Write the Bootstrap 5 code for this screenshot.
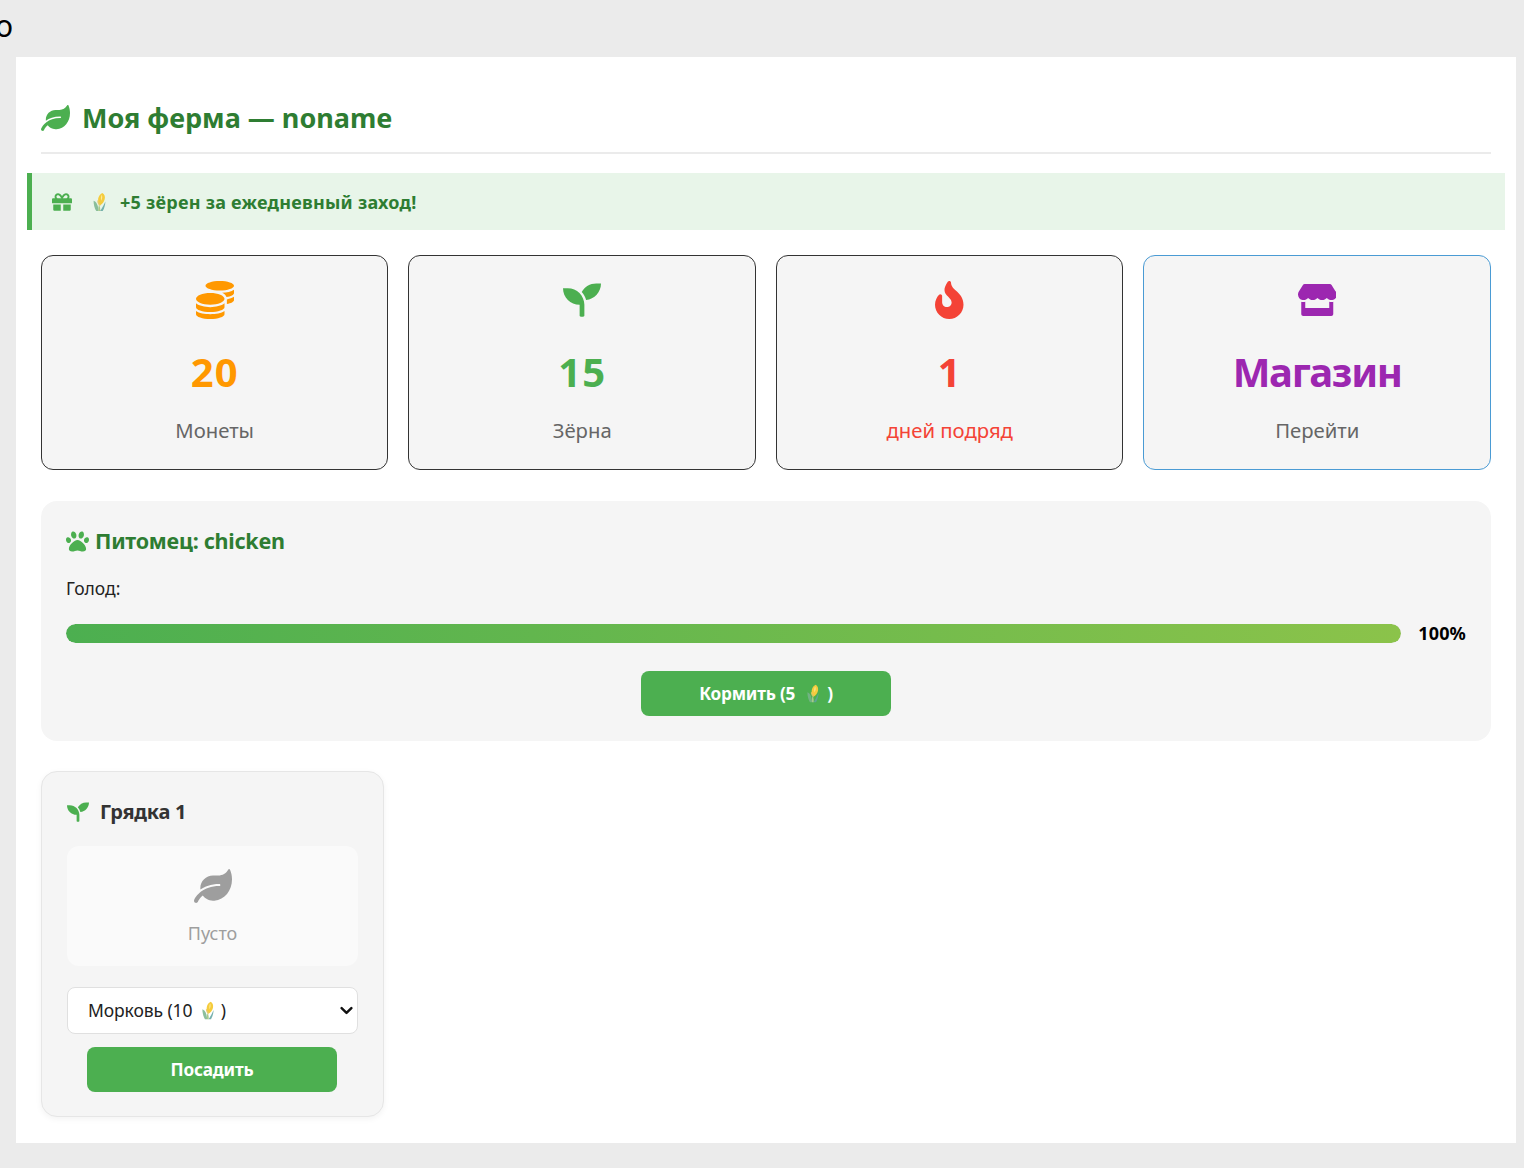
<!DOCTYPE html>
<html lang="ru">
<head>
<meta charset="utf-8">
<title>Моя ферма</title>
<link rel="stylesheet" href="https://cdn.jsdelivr.net/npm/bootstrap@5.3.0/dist/css/bootstrap.min.css">
<style>
html,body{height:100%}
body{background:#ebebeb;font-family:"Noto Sans","Open Sans",sans-serif;color:#222;overflow:hidden;padding:0 8px 25px 16px}
.topbar{height:57px;margin-left:-16px;font-size:30px;line-height:51px;color:#000}
.topbar span{display:block;margin-left:-5px}
.sheet{background:#fff;height:1086px;padding:25px}
.ico{fill:currentColor;display:block}
.inl{display:inline-block;flex:none}
.page-title{font-size:27px;font-weight:700;color:#2e7d32;padding:18px 0 16px;height:72px;border-bottom:2px solid #ebebeb;margin:0 0 19px;gap:12px;line-height:38px}
.page-title .ico{width:29px;height:26px;color:#4caf50}
.bonus{margin:0 -14px 25px;height:57px;background:#e8f5e9;border:0;border-left:5px solid #4caf50;border-radius:0;padding:1px 0 0 20px;color:#2e7d32;font-weight:700;font-size:18px;letter-spacing:.24px}
.bonus .ico{width:20px;height:20px;color:#4caf50}
.bonus .corn{margin:0 13px 0 20px}
.corn{width:15px;height:20px}
.stats{display:grid;grid-template-columns:repeat(4,1fr);gap:20px;margin:0 0 31px -.1px}
.stat{height:215px;background:#f5f5f5;border:1px solid #333;border-radius:12px;padding-top:25px;text-decoration:none}
.stat-link{border-color:#4a9bd4}
.stat .ico{height:38px;width:auto;margin:0 auto}
.stat .store-ico{height:32px;margin:3px auto}
.num{font-size:40px;font-weight:700;line-height:50px;margin-top:28px;letter-spacing:1px}
.num-word{letter-spacing:-1.3px}
.lbl{font-size:20.3px;line-height:28px;margin-top:19px;color:#666}
.c-or{color:#ff9800}.c-gr{color:#4caf50}.c-re{color:#f44336}.c-pu{color:#9c27b0}
.stat .lbl.c-re{color:#f44336}
.pet{background:#f5f5f5;border-radius:16px;height:240px;padding:24px 25px;margin-bottom:30px}
.pet-title{font-size:21.5px;font-weight:700;color:#2e7d32;line-height:32px;gap:6px;margin:0;letter-spacing:-.25px}
.pet-title .ico{width:23px;height:23px;color:#4caf50}
.hunger{font-size:17.5px;line-height:26px;margin:18px 0 0;color:#222}
.meter{gap:17px;margin-top:23px;height:19px}
.meter .progress{height:19px;border-radius:10px;background:#e0e0e0}
.meter .progress-bar{background:linear-gradient(90deg,#4caf50,#8bc34a);border-radius:10px}
.pct{font-weight:700;font-size:18px;color:#000;letter-spacing:.15px}
.go{width:250px;height:45px;background:#4caf50;border:0;border-radius:8px;color:#fff;font-weight:700;font-size:17.2px;padding:0;letter-spacing:-.2px}
.go:hover{background:#4caf50;color:#fff}
.go .corn{width:14px;height:19px;margin:0 7px 0 11px}
.feed-row{margin-top:28px}
.plot{width:343px;height:346px;background:#f5f5f5;border:1px solid #e6e6e6;border-radius:16px;box-shadow:0 2px 6px rgba(0,0,0,.05);padding:24px 25px 0}
.plot-title{font-size:20px;font-weight:700;color:#333;line-height:32px;margin:0;gap:11px;letter-spacing:-.3px}
.plot-title .ico{width:22px;height:22px;color:#4caf50}
.empty{background:#fafafa;border-radius:12px;height:120px;margin-top:18px;padding-top:21px;color:#9e9e9e}
.empty .ico{width:38px;height:38px;margin:0 auto}
.empty div{font-size:18px;line-height:26px;margin-top:15px}
.pick{margin-top:21px;position:relative}
.pick .form-select{height:47px;font-size:17.5px;border:1px solid #e0e0e0;border-radius:8px;padding:0 20px;color:#222;background-image:url("data:image/svg+xml,%3csvg xmlns='http://www.w3.org/2000/svg' viewBox='0 0 16 16'%3e%3cpath fill='none' stroke='%23111' stroke-linecap='round' stroke-linejoin='round' stroke-width='3' d='m2 5 6 6 6-6'/%3e%3c/svg%3e");background-position:right 4px center;background-size:13px 13px;box-shadow:none;letter-spacing:-.1px}
.pick .corn{position:absolute;left:134px;top:14px;width:14px;height:19px;pointer-events:none}
.plant{margin:13px 0 0 20px;display:block;text-align:center}
</style>
</head>
<body>
<svg width="0" height="0" class="position-absolute">
<defs>
<symbol id="i-corn" viewBox="0 0 16 22">
<path fill="#78b48c" d="M1.500 9.500c3 1 5 4.500 5.500 11.500H4.500C2.500 18 1.500 13.500 1.500 9.500z" opacity=".85"/>
<path fill="#f5cc3d" d="M11 1c2.500 1.200 3.500 4 2.700 7-.7 2.800-2.400 5-4.700 6.500C7 12.500 6 10 6.600 7 7.200 4.200 8.700 2.200 11 1z"/>
<path fill="#fdeb9c" d="M10.500 3c.8 2 .6 4-.6 6.500-.6-2.200-.5-4.500.6-6.500z"/>
<path fill="#e9c75c" d="M5.500 9c2 1 3.500 3 3.500 6.500-1.800-.5-3.500-3-3.500-6.500z" opacity=".9"/>
<path fill="#5fa3a0" d="M14.500 10.500c-.2 4-1.200 7.500-3 10.500H8.500c2-2 3.800-6 6-10.500z" opacity=".85"/>
<path fill="#a8c98a" d="M7.500 14c1 2 1.500 4 1.300 7H6.800c-.3-2.500 0-5 .7-7z"/>
</symbol>
<symbol id="i-leaf" viewBox="0 0 576 512"><path d="M546.200 9.700c-5.600-12.500-21.600-13-28.300-1.200C486.900 62.400 431.400 96 368 96h-80C182 96 96 182 96 288c0 7 .8 13.700 1.500 20.500C161.300 262.800 253.400 224 384 224c8.800 0 16 7.200 16 16s-7.200 16-16 16C132.600 256 26 410.100 2.400 468c-6.600 16.300 1.200 34.900 17.500 41.600 16.400 6.800 35-1.100 41.800-17.300 1.500-3.600 20.900-47.900 71.900-90.600 32.400 43.900 94 85.800 174.900 77.200C465.500 467.500 576 326.700 576 154.300c0-50.200-10.800-102.200-29.800-144.600z"/></symbol>
<symbol id="i-seed" viewBox="0 0 512 512"><path d="M64 96H0c0 123.700 100.300 224 224 224v144c0 8.800 7.200 16 16 16h32c8.800 0 16-7.200 16-16V320C288 196.300 187.700 96 64 96zm384-64c-84.200 0-157.400 46.500-195.700 115.200 27.700 30.200 48.200 66.900 59 107.600C424 243.100 512 147.900 512 32h-64z"/></symbol>
</defs>
</svg>
<div class="topbar"><span>o</span></div>
<main class="sheet">
<h1 class="page-title d-flex align-items-center"><svg class="ico inl"><use href="#i-leaf"/></svg>Моя ферма — noname</h1>
<div class="alert bonus d-flex align-items-center">
<svg class="ico inl" viewBox="0 0 512 512"><path d="M32 448c0 17.700 14.300 32 32 32h160V320H32v128zm256 32h160c17.700 0 32-14.300 32-32V320H288v160zm192-320h-42.100c6.200-12.100 10.100-25.500 10.100-40 0-48.500-39.500-88-88-88-41.600 0-68.500 21.300-103 68.300-34.500-47-61.400-68.300-103-68.300-48.500 0-88 39.500-88 88 0 14.500 3.800 27.900 10.100 40H32c-17.700 0-32 14.300-32 32v80c0 8.800 7.200 16 16 16h480c8.800 0 16-7.200 16-16v-80c0-17.700-14.300-32-32-32zm-326.100 0c-22.100 0-40-17.900-40-40s17.900-40 40-40c19.900 0 34.600 3.300 86.100 80h-86.100zm206.100 0h-86.100c51.400-76.500 65.700-80 86.100-80 22.100 0 40 17.900 40 40s-17.900 40-40 40z"/></svg>
<svg class="corn inl"><use href="#i-corn"/></svg>
<span>+5 зёрен за ежедневный заход!</span>
</div>
<section class="stats">
<div class="card stat text-center">
<svg class="ico c-or" viewBox="0 0 512 512"><path d="M0 405.300V448c0 35.300 86 64 192 64s192-28.700 192-64v-42.700C342.700 434.400 267.200 448 192 448S41.300 434.400 0 405.300zM320 128c106 0 192-28.700 192-64S426 0 320 0 128 28.700 128 64s86 64 192 64zM0 300.400V352c0 35.300 86 64 192 64s192-28.700 192-64v-51.600c-41.300 34-116.900 51.600-192 51.600S41.300 334.400 0 300.400zm416 11c57.300-11.100 96-31.700 96-55.400v-42.700c-23.200 16.400-57.300 27.600-96 34.500v63.600zM192 160C86 160 0 195.800 0 240s86 80 192 80 192-35.800 192-80-86-80-192-80zm219.300 56.300c60-10.800 100.700-32 100.700-56.300v-42.700c-35.500 25.100-96.500 38.600-160.700 41.800 29.500 14.300 51.200 33.500 60 57.200z"/></svg>
<div class="num c-or">20</div>
<div class="lbl">Монеты</div>
</div>
<div class="card stat text-center">
<svg class="ico c-gr" viewBox="0 0 512 512"><use href="#i-seed"/></svg>
<div class="num c-gr">15</div>
<div class="lbl">Зёрна</div>
</div>
<div class="card stat text-center">
<svg class="ico c-re" viewBox="0 0 384 512"><path d="M216 23.860c0-23.800-30.650-32.770-44.150-13.040C48 191.850 224 200 224 288c0 35.630-29.110 64.460-64.860 63.990-35.180-.46-63.140-29.780-63.140-64.960v-85.510c0-21.700-26.470-32.230-41.430-16.500C27.800 213.160 0 261.330 0 320c0 105.860 86.140 192 192 192s192-86.140 192-192c0-170.290-168-193-168-296.140z"/></svg>
<div class="num c-re">1</div>
<div class="lbl c-re">дней подряд</div>
</div>
<a href="#" class="card stat stat-link text-center">
<svg class="ico store-ico c-pu" viewBox="0 0 616 512"><path d="M602 118.600L537.100 15C531.300 5.700 521 0 510 0H106C95 0 84.700 5.700 78.900 15L14 118.600c-33.900 54.100-3.800 129.300 59.600 137.900 4.600.6 9.200.9 13.700.9 29.900 0 56.500-13.100 74.700-33.300 18.200 20.200 44.900 33.300 74.700 33.300 29.900 0 56.500-13.100 74.700-33.300 18.200 20.200 44.900 33.300 74.700 33.300 29.900 0 56.500-13.100 74.700-33.300 18.300 20.200 44.900 33.300 74.700 33.300 4.600 0 9.100-.3 13.700-.9 63.600-8.500 93.800-83.700 59.800-137.900zM529.500 288c-10 0-19.900-1.500-29.500-3.800V384H116v-99.800c-9.600 2.200-19.500 3.800-29.500 3.800-6 0-12.100-.4-18-1.200-5.600-.8-11.100-2.100-16.400-3.600V480c0 17.700 14.300 32 32 32h448c17.700 0 32-14.300 32-32V283.200c-5.400 1.600-10.800 2.900-16.400 3.600-6.100.8-12.100 1.200-18.200 1.200z"/></svg>
<div class="num num-word c-pu">Магазин</div>
<div class="lbl">Перейти</div>
</a>
</section>
<section class="pet">
<h2 class="pet-title d-flex align-items-center"><svg class="ico inl" viewBox="0 0 512 512"><path d="M256 224c-79.410 0-192 122.760-192 200.250 0 34.900 26.810 55.750 71.740 55.750 48.840 0 81.090-25.080 120.260-25.080 39.510 0 71.850 25.080 120.260 25.080 44.930 0 71.740-20.850 71.740-55.750C448 346.760 335.410 224 256 224zm-147.280-12.610c-10.400-34.650-42.440-57.090-71.560-50.130-29.120 6.960-44.290 40.690-33.890 75.340 10.400 34.650 42.440 57.090 71.560 50.130 29.120-6.960 44.290-40.690 33.890-75.340zm84.720-20.780c30.940-8.140 46.420-49.940 34.580-93.360s-46.520-72.010-77.460-63.870-46.420 49.940-34.580 93.360c11.840 43.420 46.520 72.010 77.460 63.870zm281.390-29.340c-29.120-6.960-61.150 15.480-71.560 50.130-10.400 34.650 4.770 68.380 33.890 75.340 29.120 6.960 61.150-15.480 71.560-50.130 10.400-34.650-4.770-68.380-33.890-75.340zm-156.270 29.340c30.940 8.140 65.620-20.450 77.460-63.870 11.840-43.420-3.640-85.210-34.580-93.360s-65.620 20.450-77.460 63.870c-11.840 43.420 3.640 85.220 34.580 93.360z"/></svg>Питомец: chicken</h2>
<p class="hunger">Голод:</p>
<div class="meter d-flex align-items-center">
<div class="progress flex-grow-1"><div class="progress-bar" style="width:100%"></div></div>
<span class="pct">100%</span>
</div>
<div class="feed-row text-center">
<button class="btn go d-inline-flex align-items-center justify-content-center">Кормить (5<svg class="corn"><use href="#i-corn"/></svg>)</button>
</div>
</section>
<section class="plot">
<h3 class="plot-title d-flex align-items-center"><svg class="ico inl"><use href="#i-seed"/></svg>Грядка 1</h3>
<div class="empty text-center">
<svg class="ico"><use href="#i-leaf"/></svg>
<div>Пусто</div>
</div>
<div class="pick">
<select class="form-select"><option>Морковь (10 &nbsp; &nbsp; &nbsp;&#8202;)</option></select>
<svg class="corn"><use href="#i-corn"/></svg>
</div>
<button class="btn go plant">Посадить</button>
</section>
</main>
<script src="https://cdn.jsdelivr.net/npm/bootstrap@5.3.0/dist/js/bootstrap.bundle.min.js"></script>
</body>
</html>
